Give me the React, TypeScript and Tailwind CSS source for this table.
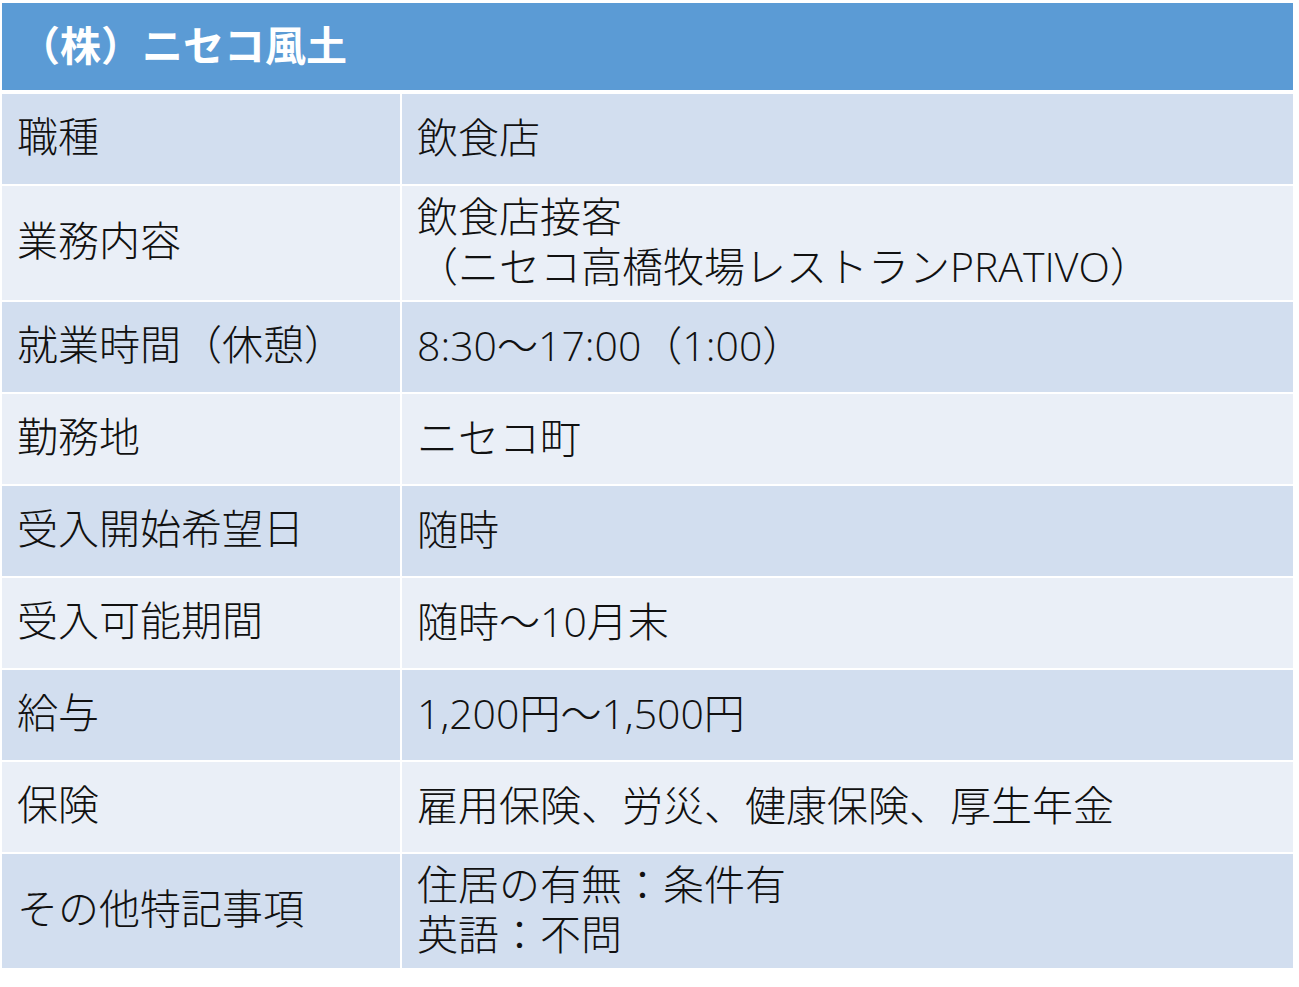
const rows: { label: string; value: string[]; tall?: boolean }[] = [
  { label: "職種", value: ["飲食店"] },
  { label: "業務内容", value: ["飲食店接客", "（ニセコ高橋牧場レストランPRATIVO）"], tall: true },
  { label: "就業時間（休憩）", value: ["8:30～17:00（1:00）"] },
  { label: "勤務地", value: ["ニセコ町"] },
  { label: "受入開始希望日", value: ["随時"] },
  { label: "受入可能期間", value: ["随時～10月末"] },
  { label: "給与", value: ["1,200円～1,500円"] },
  { label: "保険", value: ["雇用保険、労災、健康保険、厚生年金"] },
  { label: "その他特記事項", value: ["住居の有無：条件有", "英語：不問"], tall: true },
];

export default function App() {
  return (
    <div
      className="w-[1299px] h-[987px] bg-white pt-[3px] pl-[2px]"
      style={{ fontFamily: '"Open Sans", "Noto Sans CJK JP", sans-serif' }}
    >
      <div className="w-[1291px] flex flex-col">
        <div className="h-[87px] bg-[#5b9bd5] flex items-center pl-[17px] pb-[3px] text-white text-[41px] font-bold leading-none">
          （株）ニセコ風土
        </div>
        <div className="flex flex-col gap-[2px] pt-[4px]">
          {rows.map((r, i) => (
            <div
              key={r.label}
              className={`flex gap-[2px] text-[41px] font-light text-[#111] ${r.tall ? "h-[114px]" : "h-[90px]"}`}
            >
              <div
                className={`w-[398px] flex items-center pl-[15px] pb-[4px] ${i % 2 === 0 ? "bg-[#d2deef]" : "bg-[#eaeff7]"}`}
              >
                {r.label}
              </div>
              <div
                className={`flex-1 flex flex-col justify-center pl-[15px] pb-[4px] leading-[50px] ${i % 2 === 0 ? "bg-[#d2deef]" : "bg-[#eaeff7]"}`}
              >
                {r.value.map((v) => (
                  <div key={v} className="whitespace-nowrap">
                    {v}
                  </div>
                ))}
              </div>
            </div>
          ))}
        </div>
      </div>
    </div>
  );
}
